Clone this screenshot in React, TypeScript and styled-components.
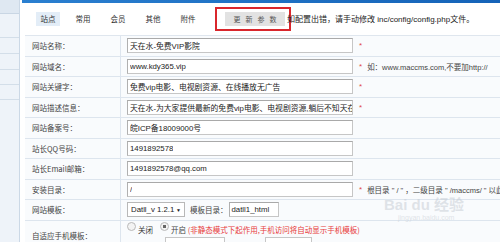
import React from "react";
import styled, { createGlobalStyle } from "styled-components";

const Global = createGlobalStyle`
  html, body { margin: 0; padding: 0; background: #fff; overflow: hidden; }
  body { font-family: "Liberation Sans", "Noto Sans CJK SC", sans-serif; font-size: 8px; color: #333; }
`;

const Page = styled.div`
  display: flex;
  width: 500px;
  height: 242px;
  overflow: hidden;
  position: relative;
`;

const Sidebar = styled.div`
  width: 19px;
  flex: none;
  background: #eef3f9;
  border-right: 1px solid #cbd8e6;
  display: flex;
  flex-direction: column;
`;

const SideHead = styled.div`
  height: 13px;
  flex: none;
  background: #dfe8f2;
  border-bottom: 1px solid #c9d6e4;
`;

const SideItem = styled.div<{ $h: number }>`
  height: ${(p) => p.$h}px;
  flex: none;
  border-bottom: 1px solid #d3dee9;
`;

const Main = styled.div`
  flex: 1;
  margin-left: 2px;
  display: flex;
  flex-direction: column;
  min-width: 0;
`;

const TopBar = styled.div`
  height: 3px;
  flex: none;
  background: linear-gradient(to right, #2a7fd0, #1563b8);
`;

const TabBar = styled.div`
  display: flex;
  flex: none;
  align-items: center;
  height: 32px;
  padding-left: 14px;
  padding-bottom: 1px;
  box-sizing: border-box;
`;

const Tab = styled.div<{ $active?: boolean }>`
  width: 24px;
  height: 14px;
  margin-right: 11px;
  display: flex;
  align-items: center;
  justify-content: center;
  font-family: "Noto Sans CJK SC", sans-serif;
  font-size: 7.5px;
  color: #333;
  background: ${(p) => (p.$active ? "#e3edf7" : "transparent")};
`;

const RedFrame = styled.div`
  margin-left: 4px;
  width: 76px;
  height: 24px;
  box-sizing: border-box;
  border: 2px solid #d9262c;
  display: flex;
  align-items: center;
  padding-left: 8px;
`;

const UpdateBtn = styled.div`
  width: 60px;
  height: 14px;
  background: #e2e2e2;
  display: flex;
  align-items: center;
  justify-content: center;
  font-family: "Noto Sans CJK SC", sans-serif;
  font-size: 7px;
  letter-spacing: 5px;
  padding-left: 5px;
  box-sizing: border-box;
  color: #555;
  white-space: nowrap;
  flex: none;
`;

const Note = styled.div`
  margin-left: -4px;
  font-size: 8px;
  color: #222;
  white-space: nowrap;
  font-family: "Liberation Sans", "Noto Sans CJK SC", sans-serif;
`;

const Table = styled.div`
  flex: none;
  margin-left: 3px;
  border-top: 1px solid #dfe6ee;
  background: #f9fbfd;
  display: flex;
  flex-direction: column;
`;

const Row = styled.div<{ $h?: number }>`
  display: flex;
  flex: none;
  height: ${(p) => p.$h ?? 19.5}px;
  border-bottom: 1px solid #dde5ee;
  box-sizing: content-box;
`;

const Label = styled.div`
  width: 88px;
  flex: none;
  padding-left: 7px;
  display: flex;
  align-items: center;
  border-right: 1px solid #dde5ee;
  font-family: "Noto Sans CJK SC", sans-serif;
  font-size: 7.5px;
  color: #444;
  white-space: nowrap;
`;

const Cell = styled.div<{ $top?: boolean }>`
  flex: 1;
  display: flex;
  align-items: ${(p) => (p.$top ? "flex-start" : "center")};
  padding-left: 6px;
  white-space: nowrap;
  min-width: 0;
`;

const Input = styled.div<{ $w?: number }>`
  width: ${(p) => p.$w ?? 226}px;
  height: 15px;
  flex: none;
  box-sizing: border-box;
  background: #fff;
  border: 1px solid #c6c6c6;
  border-top-color: #a9a9a9;
  border-left-color: #b0b0b0;
  display: flex;
  align-items: center;
  padding-left: 2px;
  font-size: 7.8px;
  color: #222;
  overflow: hidden;
  white-space: nowrap;
  font-family: "Liberation Sans", "Noto Sans CJK SC", sans-serif;
`;

const InputText = styled.span`
  overflow: hidden;
  white-space: nowrap;
  min-width: 0;
`;

const Star = styled.span`
  color: #e0474c;
  margin-left: 6px;
  font-size: 8px;
`;

const Hint = styled.span`
  margin-left: 5px;
  color: #444;
  font-size: 7.5px;
  font-family: "Liberation Sans", "Noto Sans CJK SC", sans-serif;
`;

const Select = styled.div`
  width: 58px;
  height: 15px;
  box-sizing: border-box;
  background: #fff;
  border: 1px solid #b8b8b8;
  display: flex;
  align-items: center;
  justify-content: space-between;
  padding: 0 3px;
  font-size: 7.8px;
  color: #222;
  white-space: nowrap;
`;

const Caret = styled.span`
  font-size: 5px;
`;

const Inline = styled.span`
  margin: 0 1px 0 5px;
  font-family: "Noto Sans CJK SC", sans-serif;
  font-size: 7.5px;
  color: #444;
`;

const RadioLine = styled.div`
  display: flex;
  align-items: center;
  height: 13px;
  margin-top: 2px;
  font-family: "Noto Sans CJK SC", sans-serif;
  font-size: 7.5px;
  color: #444;
`;

const Radio = styled.span<{ $on?: boolean }>`
  width: 7px;
  height: 7px;
  border-radius: 50%;
  border: 1px solid #b9b9b9;
  background: ${(p) => (p.$on ? "radial-gradient(circle, #666 0 1.6px, #f4f4f4 2px)" : "#f3f3f3")};
  margin-right: 2px;
  margin-top: -5px;
  flex: none;
`;

const Opt = styled.span`
  margin-right: 7px;
  color: #333;
`;

const Red = styled.span`
  color: #e83a3a;
`;

const Column = styled.div`
  display: flex;
  flex-direction: column;
`;

const SubBoxes = styled.div`
  display: flex;
  margin-left: 38px;
  margin-top: 1px;
  gap: 40px;
`;

const SubBox = styled.div<{ $w: number }>`
  width: ${(p) => p.$w}px;
  height: 12px;
  background: #fff;
  border: 1px solid #c6c6c6;
`;

const Watermark = styled.div`
  position: absolute;
  left: 384px;
  top: 197px;
  color: rgba(196, 202, 210, 0.5);
  font-family: "Liberation Sans", "Noto Sans CJK SC", sans-serif;
  pointer-events: none;
  display: flex;
  flex-direction: column;
  align-items: flex-start;
  white-space: nowrap;
`;

const WmBig = styled.span`
  font-size: 15px;
  font-weight: bold;
  line-height: 16px;
`;

const WmSmall = styled.span`
  font-size: 7px;
  margin-left: 14px;
  margin-top: 1px;
`;

const rows: { label: string; value: string; star?: boolean; hint?: string }[] = [
  { label: "网站名称：", value: "天在水-免费VIP影院", star: true },
  { label: "网站域名：", value: "www.kdy365.vip", star: true, hint: "如：www.maccms.com,不要加http://" },
  { label: "网站关键字：", value: "免费vip电影、电视剧资源、在线播放无广告", star: true },
  { label: "网站描述信息：", value: "天在水-为大家提供最新的免费vip电影、电视剧资源,躺后不知天在水,满船清梦", star: true },
  { label: "网站备案号：", value: "皖ICP备18009000号" },
  { label: "站长QQ号码：", value: "1491892578" },
  { label: "站长Email邮箱：", value: "1491892578@qq.com" },
  { label: "安装目录：", value: "/", star: true, hint: "根目录 \" / \" ，二级目录 \" /maccms/ \" 以此类推" },
];

export default function App() {
  return (
    <Page>
      <Global />
      <Sidebar>
        <SideHead />
        <SideItem $h={23} />
        <SideItem $h={15} />
        <SideItem $h={15} />
        <SideItem $h={14} />
        <SideItem $h={14} />
      </Sidebar>
      <Main>
        <TopBar />
        <TabBar>
          <Tab $active>站点</Tab>
          <Tab>常用</Tab>
          <Tab>会员</Tab>
          <Tab>其他</Tab>
          <Tab>附件</Tab>
          <RedFrame>
            <UpdateBtn>更新参数</UpdateBtn>
          </RedFrame>
          <Note>如配置出错，请手动修改 inc/config/config.php文件。</Note>
        </TabBar>
        <Table>
          {rows.map((r) => (
            <Row key={r.label}>
              <Label>{r.label}</Label>
              <Cell>
                <Input>
                  <InputText>{r.value}</InputText>
                </Input>
                {r.star && <Star>*</Star>}
                {r.hint && <Hint>{r.hint}</Hint>}
              </Cell>
            </Row>
          ))}
          <Row>
            <Label>网站模板：</Label>
            <Cell>
              <Select>
                Datll_v 1.2.1 <Caret>▼</Caret>
              </Select>
              <Inline>模板目录：</Inline>
              <Input $w={50}>datll1_html</Input>
            </Cell>
          </Row>
          <Row $h={30}>
            <Label>自适应手机模板：</Label>
            <Cell $top>
              <Column>
                <RadioLine>
                  <Radio />
                  <Opt>关闭</Opt>
                  <Radio $on />
                  <span>开启</span>
                  <Red>&nbsp;(非静态模式下起作用,手机访问将自动显示手机模板)</Red>
                </RadioLine>
                <SubBoxes>
                  <SubBox $w={58} />
                  <SubBox $w={45} />
                </SubBoxes>
              </Column>
            </Cell>
          </Row>
        </Table>
      </Main>
      <Watermark>
        <WmBig>Bai du 经验</WmBig>
        <WmSmall>jingyan.baidu.com</WmSmall>
      </Watermark>
    </Page>
  );
}
